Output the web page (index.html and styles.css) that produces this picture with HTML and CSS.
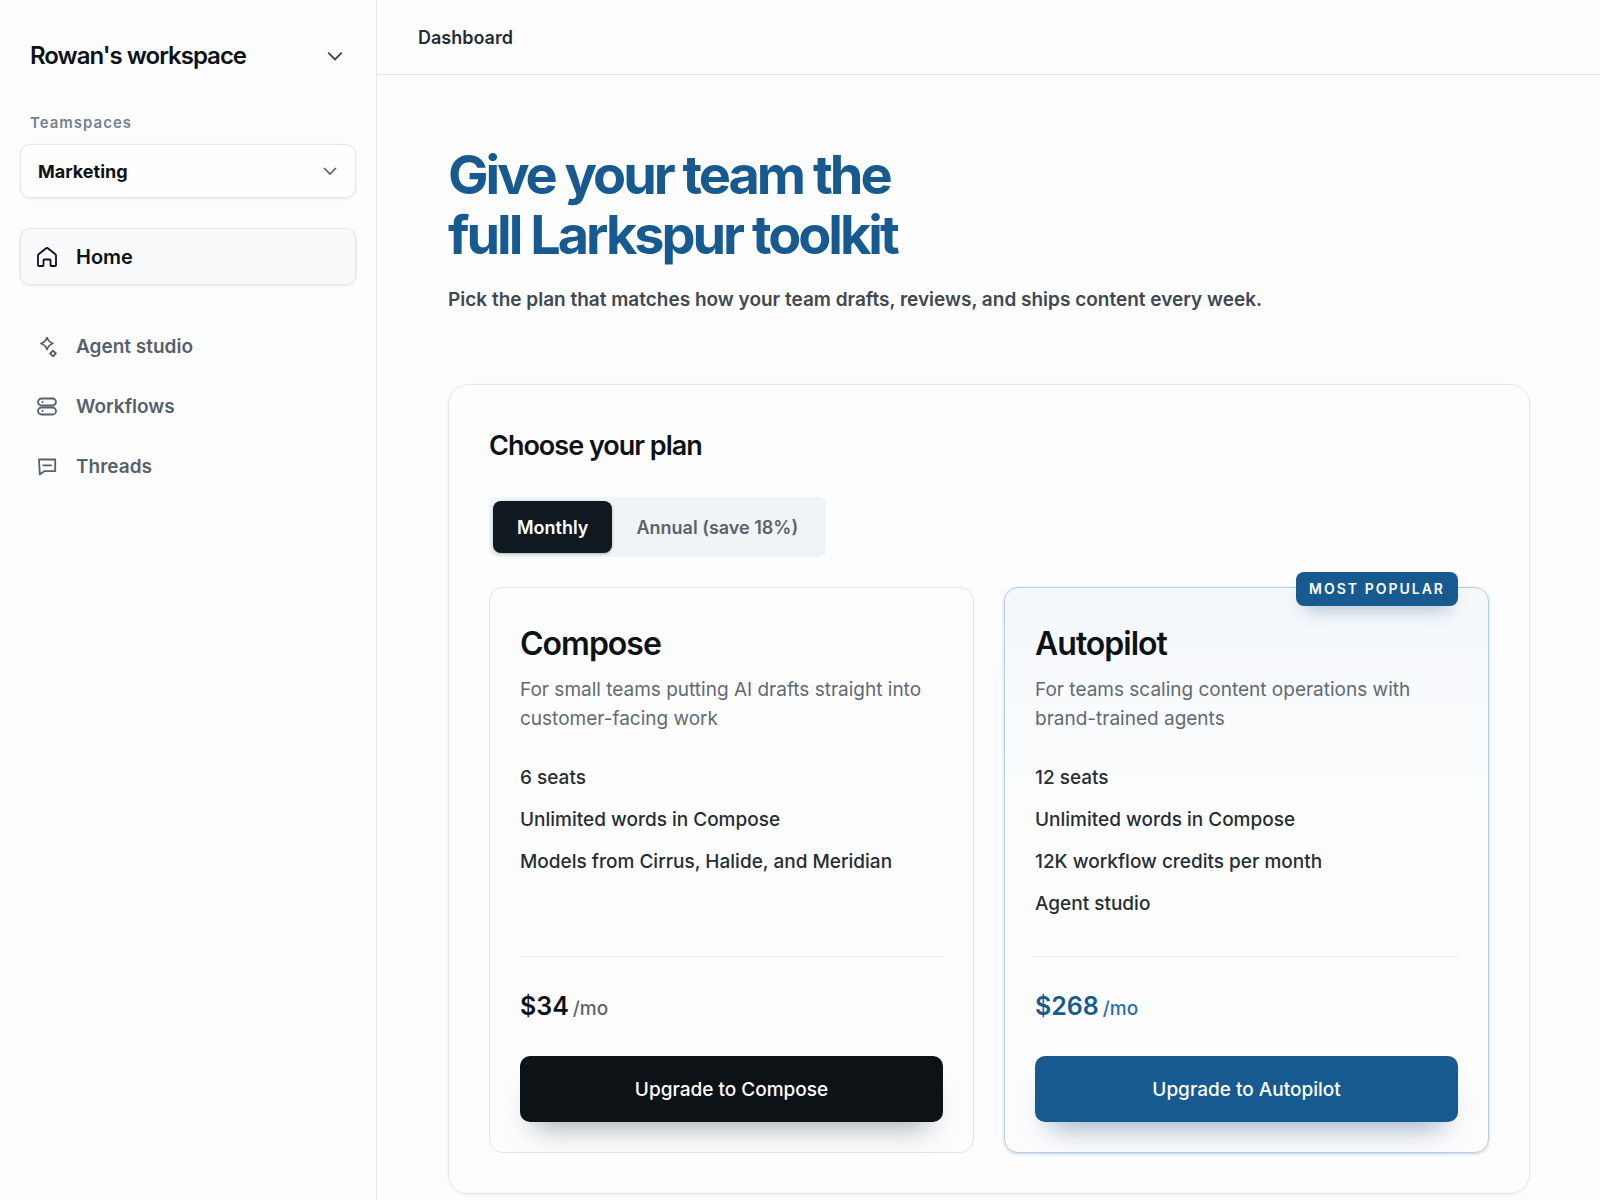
FILE: index.html
```html
<!DOCTYPE html>
<html lang="en">
<head>
    <meta charset="UTF-8">
    <meta name="viewport" content="width=device-width, initial-scale=1.0">
    <title>Dashboard - Larkspur</title>
    <link rel="stylesheet" href="styles.css">
</head>
<body>
    <div class="app">
        <aside class="sidebar">
            <button class="workspace" type="button">
                <span>Rowan's workspace</span>
                <svg class="chevron" viewBox="0 0 16 16" aria-hidden="true"><path d="M2 5l6 6 6-6"/></svg>
            </button>

            <label class="teamspace-label" for="teamspace">Teamspaces</label>
            <div class="select-wrap">
                <select id="teamspace" class="select">
                    <option>Marketing</option>
                </select>
                <svg class="chevron chevron-small" viewBox="0 0 16 16" aria-hidden="true"><path d="M2 5l6 6 6-6"/></svg>
            </div>

            <nav class="nav">
                <a class="nav-item active" href="#home">
                    <svg class="icon" viewBox="0 0 20 20" aria-hidden="true">
                        <path d="M1 8.6Q1 7.8 1.6 7.3L9.2 1.2Q10 .6 10.8 1.2L18.4 7.3Q19 7.8 19 8.6V18.2Q19 19 18.2 19H14.3Q13.5 19 13.5 18.2V13.2Q13.5 12.5 12.8 12.5H7.2Q6.5 12.5 6.5 13.2V18.2Q6.5 19 5.7 19H1.8Q1 19 1 18.2Z"/>
                    </svg>
                    <span>Home</span>
                </a>
                <a class="nav-item" href="#agent-studio">
                    <svg class="icon" viewBox="0 0 20 20" aria-hidden="true">
                        <path d="M10 .5Q11.5 5 16 6.5Q11.5 8 10 12.5Q8.5 8 4 6.5Q8.5 5 10 .5Z"/>
                        <path d="M16 13.6L18.8 16.5L16 19.4L13.2 16.5Z"/>
                    </svg>
                    <span>Agent studio</span>
                </a>
                <a class="nav-item" href="#workflows">
                    <svg class="icon" viewBox="0 0 20 20" aria-hidden="true">
                        <rect x="1" y="1.5" width="18" height="7" rx="3.5"/>
                        <rect x="1" y="10.5" width="18" height="7" rx="3.5"/>
                        <path d="M5.5 5h.2M5.5 14h.2"/>
                    </svg>
                    <span>Workflows</span>
                </a>
                <a class="nav-item" href="#threads">
                    <svg class="icon" viewBox="0 0 20 20" aria-hidden="true">
                        <path d="M2 2.5H18.2V14.2H7.2L2.8 17.4Z"/>
                        <path d="M6.2 8.3h8"/>
                    </svg>
                    <span>Threads</span>
                </a>
            </nav>
        </aside>

        <div class="main">
            <header class="topbar">Dashboard</header>

            <main class="content">
                <h1>Give your team the<br>full Larkspur toolkit</h1>
                <p class="lead">Pick the plan that matches how your team drafts, reviews, and ships content every week.</p>

                <section class="panel">
                    <h2>Choose your plan</h2>
                    <div class="toggle">
                        <button class="toggle-btn selected" type="button" aria-pressed="true">Monthly</button>
                        <button class="toggle-btn" type="button" aria-pressed="false">Annual (save 18%)</button>
                    </div>

                    <div class="plans">
                        <article class="plan">
                            <h3>Compose</h3>
                            <p class="plan-text">For small teams putting AI drafts straight into customer-facing work</p>
                            <ul class="features">
                                <li>6 seats</li>
                                <li>Unlimited words in Compose</li>
                                <li>Models from Cirrus, Halide, and Meridian</li>
                            </ul>
                            <div class="price"><strong>$34</strong><span>/mo</span></div>
                            <button class="upgrade" type="button">Upgrade to Compose</button>
                        </article>

                        <article class="plan popular">
                            <span class="badge">MOST POPULAR</span>
                            <h3>Autopilot</h3>
                            <p class="plan-text">For teams scaling content operations with brand-trained agents</p>
                            <ul class="features">
                                <li>12 seats</li>
                                <li>Unlimited words in Compose</li>
                                <li>12K workflow credits per month</li>
                                <li>Agent studio</li>
                            </ul>
                            <div class="price"><strong>$268</strong><span>/mo</span></div>
                            <button class="upgrade" type="button">Upgrade to Autopilot</button>
                        </article>
                    </div>
                </section>
            </main>
        </div>
    </div>
</body>
</html>
```
FILE: styles.css
```css
* {
    box-sizing: border-box;
}
body {
    margin: 0;
    background-color: #fdfdfe;
    color: #0d1216;
    font-family: Inter, "Liberation Sans", sans-serif;
    font-size: 19px;
}
h1, h2, h3, p, ul {
    margin: 0;
}
button, select {
    font-family: inherit;
    color: inherit;
    cursor: pointer;
}
.app {
    display: grid;
    grid-template-columns: 377px 1fr;
    min-height: 100vh;
}
.sidebar {
    padding: 32px 20px;
    border-right: 1px solid #e6eaed;
}
.workspace {
    display: flex;
    align-items: center;
    justify-content: space-between;
    width: 100%;
    padding: 0 12px 0 10px;
    border: 0;
    background: none;
    font-size: 24px;
    font-weight: 600;
    line-height: 47px;
    letter-spacing: -1px;
}
.chevron {
    width: 18px;
    height: 18px;
    fill: none;
    stroke: #3c444c;
    stroke-width: 1.7;
}
.chevron-small {
    width: 16px;
    height: 16px;
    stroke: #59636e;
}
.teamspace-label {
    display: block;
    margin-top: 31px;
    padding-left: 10px;
    color: #74818e;
    font-size: 15px;
    font-weight: 600;
    line-height: 26px;
    letter-spacing: 1px;
}
.select-wrap {
    position: relative;
    margin-top: 8px;
}
.select-wrap .chevron {
    position: absolute;
    right: 18px;
    top: 50%;
    margin-top: -8px;
    pointer-events: none;
}
.select {
    display: block;
    width: 100%;
    height: 54px;
    padding: 0 17px;
    appearance: none;
    border: 1px solid #e3e7eb;
    border-radius: 10px;
    background-color: #fefefe;
    box-shadow: 0 1px 3px rgba(16, 24, 32, 0.08);
    font-size: 18px;
    font-weight: 700;
}
.nav {
    display: flex;
    flex-direction: column;
    gap: 3px;
    margin-top: 30px;
}
.nav-item {
    display: flex;
    align-items: center;
    gap: 19px;
    height: 57px;
    padding: 0 16px;
    border: 1px solid transparent;
    border-radius: 10px;
    color: #56616c;
    font-weight: 600;
    text-decoration: none;
}
.nav-item.active {
    margin-bottom: 30px;
    border-color: #e3e7eb;
    background-color: #f8fafc;
    box-shadow: 0 1px 3px rgba(16, 24, 32, 0.1);
    color: #0d1216;
    font-size: 20px;
}
.icon {
    width: 20px;
    height: 20px;
    fill: none;
    stroke: currentColor;
    stroke-width: 1.8;
    stroke-linecap: round;
    stroke-linejoin: round;
}
.topbar {
    height: 75px;
    padding: 0 41px;
    border-bottom: 1px solid #e3e7eb;
    color: #262d34;
    font-size: 18px;
    font-weight: 600;
    line-height: 75px;
}
.content {
    padding: 70px 70px 0 71px;
}
h1 {
    color: #175a90;
    font-size: 54px;
    font-weight: 700;
    line-height: 60px;
    letter-spacing: -3px;
}
.lead {
    margin: 20px 0 70px;
    color: #3f4851;
    font-weight: 600;
    line-height: 29px;
}
.panel {
    padding: 40px;
    border: 1px solid #e3e8ea;
    border-radius: 20px;
    box-shadow: 0 1px 3px rgba(16, 24, 32, 0.06);
}
h2 {
    font-size: 27px;
    font-weight: 600;
    line-height: 42px;
    letter-spacing: -1px;
}
.toggle {
    display: inline-flex;
    margin: 30px 0;
    padding: 4px;
    border-radius: 8px;
    background-color: #f0f4f7;
}
.toggle-btn {
    height: 52px;
    padding: 0 24px;
    border: 0;
    border-radius: 8px;
    background: none;
    color: #59636e;
    font-size: 18px;
    font-weight: 600;
}
.toggle-btn.selected {
    background-color: #101820;
    box-shadow: 0 1px 3px rgba(16, 24, 32, 0.3);
    color: #fff;
}
.plans {
    display: grid;
    grid-template-columns: 1fr 1fr;
    gap: 30px;
}
.plan {
    position: relative;
    display: flex;
    flex-direction: column;
    padding: 30px;
    border: 1px solid #e0e6e9;
    border-radius: 14px;
}
.plan.popular {
    border-color: #b3cfe1;
    background: linear-gradient(#f4f8fb, #fdfdfe 40%);
    box-shadow: 0 1px 3px rgba(23, 90, 144, 0.25);
}
.badge {
    position: absolute;
    top: -16px;
    right: 30px;
    padding: 0 13px;
    border-radius: 8px;
    background-color: #175a90;
    box-shadow: 0 12px 18px -8px rgba(23, 60, 110, 0.3);
    color: #fff;
    font-size: 14px;
    font-weight: 600;
    line-height: 34px;
    letter-spacing: 2px;
}
h3 {
    font-size: 32px;
    font-weight: 600;
    line-height: 52px;
    letter-spacing: -1px;
}
.plan-text {
    margin-top: 5px;
    color: #606a75;
    line-height: 29px;
}
.features {
    flex: 1;
    padding: 24px 0 31px;
    border-bottom: 1px solid #eaedf0;
    list-style: none;
    color: #262d34;
    font-weight: 500;
    line-height: 42px;
}
.price {
    display: flex;
    align-items: baseline;
    gap: 4px;
    padding: 30px 0 28px;
    line-height: 38px;
    color: #59636e;
    font-weight: 500;
}
.price strong {
    color: #0d1216;
    font-size: 25px;
    font-weight: 600;
}
.upgrade {
    height: 66px;
    border: 0;
    border-radius: 10px;
    background-color: #0d1216;
    box-shadow: 0 20px 28px -14px rgba(16, 24, 40, 0.35);
    color: #fff;
    font-size: 19px;
    font-weight: 500;
}
.popular .price {
    color: #1f6fae;
}
.popular .price strong {
    color: #175a90;
}
.popular .upgrade {
    background-color: #175a90;
    box-shadow: 0 20px 28px -14px rgba(23, 60, 110, 0.4);
}
```
